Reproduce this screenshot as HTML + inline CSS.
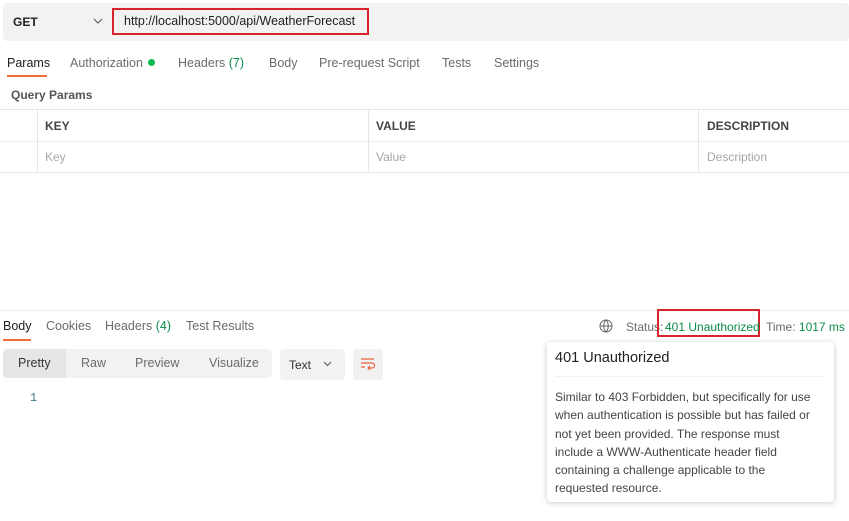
<!DOCTYPE html>
<html><head><meta charset="utf-8"><style>
*{box-sizing:border-box;margin:0;padding:0}
body{width:849px;height:521px;background:#fff;font-family:"Liberation Sans",sans-serif;font-size:12px;color:#212121;position:relative;overflow:hidden}
.a{position:absolute;white-space:nowrap}
.g{color:#6b6b6b}
</style></head><body>
<div class="a" style="left:3px;top:3px;width:846px;height:38px;background:#f2f2f2;border-radius:4px"></div>
<div class="a" style="left:13px;top:15px;font-weight:bold;font-size:12px">GET</div>
<svg class="a" style="left:93px;top:18px" width="10" height="7"><path d="M1 1l4 4 4-4" stroke="#555" fill="none"/></svg>
<div class="a" style="left:112px;top:8px;width:257px;height:27px;border:2px solid #d8222e"></div>
<div class="a" style="left:124px;top:14px;font-size:12.5px">http://localhost:5000/api/WeatherForecast</div>

<div class="a" style="left:7px;top:56px;font-size:12.5px">Params</div>
<div class="a" style="left:7px;top:75px;width:40px;height:2px;background:#f26b3a"></div>
<div class="a g" style="left:70px;top:56px;font-size:12.5px">Authorization</div>
<div class="a" style="left:148px;top:59px;width:7px;height:7px;border-radius:50%;background:#0cbb52"></div>
<div class="a g" style="left:178px;top:56px;font-size:12.5px">Headers <span style="color:#0a8c4a">(7)</span></div>
<div class="a g" style="left:269px;top:56px;font-size:12.5px">Body</div>
<div class="a g" style="left:319px;top:56px;font-size:12.5px">Pre-request Script</div>
<div class="a g" style="left:442px;top:56px;font-size:12.5px">Tests</div>
<div class="a g" style="left:494px;top:56px;font-size:12.5px">Settings</div>

<div class="a" style="left:11px;top:88px;font-weight:bold;color:#555;font-size:12px">Query Params</div>
<div class="a" style="left:0;top:109px;width:849px;height:1px;background:#e6e6e6"></div>
<div class="a" style="left:0;top:141px;width:849px;height:1px;background:#ededed"></div>
<div class="a" style="left:0;top:172px;width:849px;height:1px;background:#e6e6e6"></div>
<div class="a" style="left:37px;top:110px;width:1px;height:62px;background:#e6e6e6"></div>
<div class="a" style="left:368px;top:110px;width:1px;height:62px;background:#e6e6e6"></div>
<div class="a" style="left:698px;top:110px;width:1px;height:62px;background:#e6e6e6"></div>
<div class="a" style="left:45px;top:119px;font-weight:bold;color:#444">KEY</div>
<div class="a" style="left:376px;top:119px;font-weight:bold;color:#444">VALUE</div>
<div class="a" style="left:707px;top:119px;font-weight:bold;color:#444">DESCRIPTION</div>
<div class="a" style="left:45px;top:150px;color:#a6a6a6">Key</div>
<div class="a" style="left:376px;top:150px;color:#a6a6a6">Value</div>
<div class="a" style="left:707px;top:150px;color:#a6a6a6">Description</div>

<div class="a" style="left:0;top:310px;width:849px;height:1px;background:#ededed"></div>
<div class="a" style="left:3px;top:319px;font-size:12.5px">Body</div>
<div class="a" style="left:3px;top:339px;width:28px;height:2px;background:#f26b3a"></div>
<div class="a g" style="left:46px;top:319px;font-size:12.5px">Cookies</div>
<div class="a g" style="left:105px;top:319px;font-size:12.5px">Headers <span style="color:#0a8c4a">(4)</span></div>
<div class="a g" style="left:186px;top:319px;font-size:12.5px">Test Results</div>

<div class="a" style="left:3px;top:349px;width:269px;height:29px;background:#f2f2f2;border-radius:4px"></div>
<div class="a" style="left:3px;top:349px;width:63px;height:29px;background:#e6e6e6;border-radius:4px 0 0 4px"></div>
<div class="a" style="left:18px;top:356px;font-size:12.5px;color:#333">Pretty</div>
<div class="a g" style="left:81px;top:356px;font-size:12.5px">Raw</div>
<div class="a g" style="left:135px;top:356px;font-size:12.5px">Preview</div>
<div class="a g" style="left:209px;top:356px;font-size:12.5px">Visualize</div>
<div class="a" style="left:280px;top:349px;width:65px;height:31px;background:#f2f2f2;border-radius:4px"></div>
<div class="a" style="left:289px;top:358px;font-size:12px;color:#333">Text</div>
<svg class="a" style="left:323px;top:361px" width="9" height="6"><path d="M1 1l3.5 3.5L8 1" stroke="#555" fill="none"/></svg>
<div class="a" style="left:353px;top:349px;width:30px;height:31px;background:#f2f2f2;border-radius:4px"></div>
<svg class="a" style="left:360px;top:357px" width="16" height="14"><path d="M1 2h13M1 6h11a2.5 2.5 0 0 1 0 5H8M10 9l-2 2 2 2M1 10h4" stroke="#e8633a" fill="none" stroke-width="1.2"/></svg>
<div class="a" style="left:30px;top:391px;color:#3c7a8a;font-family:'Liberation Mono',monospace">1</div>

<svg class="a" style="left:599px;top:319px" width="14" height="14"><circle cx="7" cy="7" r="6" stroke="#666" fill="none"/><path d="M1 7h12M7 1c-3 3-3 9 0 12M7 1c3 3 3 9 0 12" stroke="#666" fill="none"/></svg>
<div class="a g" style="left:626px;top:320px">Status:</div>
<div class="a" style="left:657px;top:309px;width:103px;height:28px;border:2px solid #d8222e"></div>
<div class="a" style="left:665px;top:320px;color:#0a8c4a">401 Unauthorized</div>
<div class="a g" style="left:766px;top:320px">Time: <span style="color:#0a8c4a">1017 ms</span></div>

<div class="a" style="left:547px;top:342px;width:287px;height:160px;background:#fff;border-radius:4px;box-shadow:0 1px 6px rgba(0,0,0,.22)"></div>
<div class="a" style="left:555px;top:350px;font-size:14.5px;color:#212121">401 Unauthorized</div>
<div class="a" style="left:555px;top:376px;width:270px;height:1px;background:#f2f2f2"></div>
<div class="a" style="left:555px;top:388px;font-size:12px;color:#444;line-height:18.3px">Similar to 403 Forbidden, but specifically for use<br>when authentication is possible but has failed or<br>not yet been provided. The response must<br>include a WWW-Authenticate header field<br>containing a challenge applicable to the<br>requested resource.</div>
</body></html>
